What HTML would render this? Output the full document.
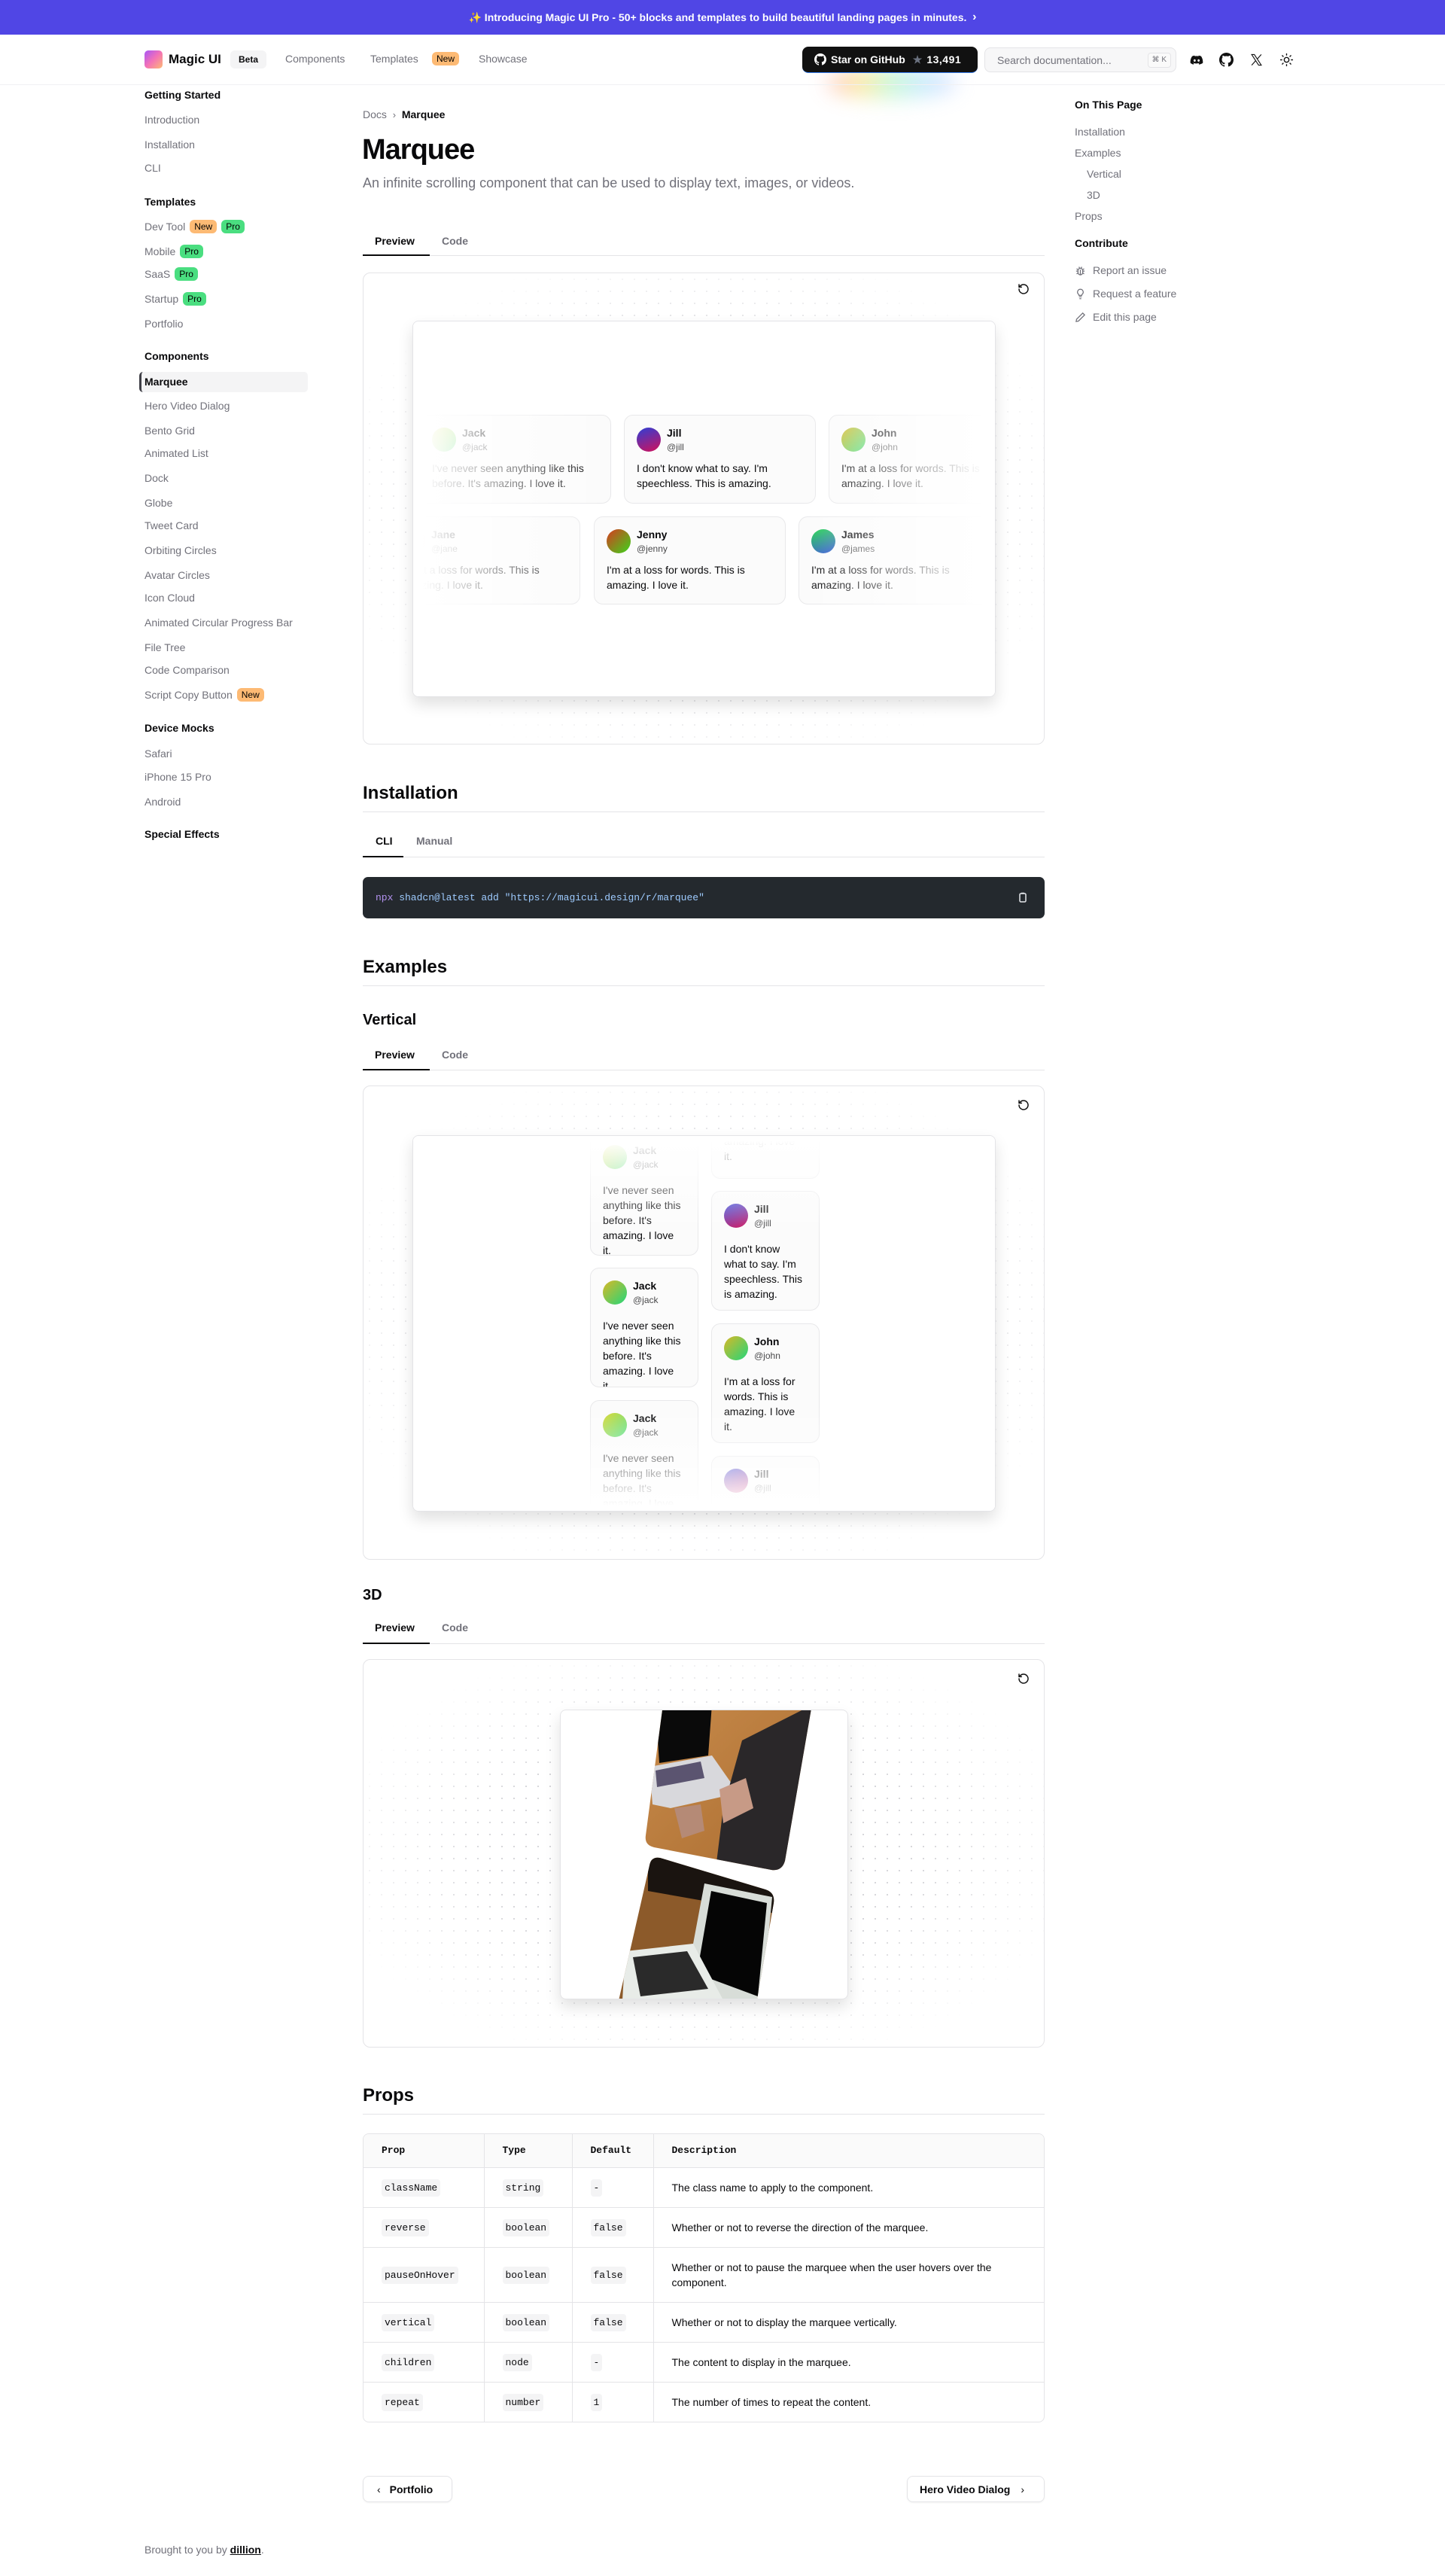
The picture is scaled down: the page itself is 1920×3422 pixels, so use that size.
<!DOCTYPE html>
<html><head><meta charset="utf-8"><style>
*{box-sizing:border-box;margin:0;padding:0}
body{width:1920px;height:3422px;position:relative;font-family:"Liberation Sans",sans-serif;color:#09090b;background:#fff;overflow:hidden}
.a{position:absolute}
.mono{font-family:"Liberation Mono",monospace}
.banner{left:0;top:0;width:1920px;height:46px;background:#5046e5;color:#fff;font-size:14px;font-weight:600;display:flex;align-items:center;justify-content:center}
.muted{color:#71717a}
.side div{position:absolute;left:192px;font-size:14px;color:#71717a;white-space:nowrap;line-height:20px}
.side .h{color:#09090b;font-weight:700}
.bd{display:inline-block;font-size:12px;line-height:16px;padding:1px 6px;border-radius:6px;color:#000;margin-left:6px;vertical-align:1px}
.bn{background:#fdba74}.bp{background:#4ade80}
.toc div{position:absolute;left:1428px;font-size:14px;color:#71717a;line-height:20px;white-space:nowrap}
.toc .h{color:#09090b;font-weight:700}
.tabs{position:absolute;left:482px;width:906px;height:1px;background:#e4e4e7}
.tab{position:absolute;font-size:14px;font-weight:600;line-height:20px}
.ul{position:absolute;height:2px;background:#09090b}
.box{position:absolute;left:482px;width:906px;border:1px solid #e4e4e7;border-radius:10px;overflow:hidden}
.dots{position:absolute;inset:0;background-image:radial-gradient(#d4d4d8 1px,transparent 1.2px);background-size:16px 16px;-webkit-mask-image:radial-gradient(ellipse at center,#000 45%,transparent 80%);mask-image:radial-gradient(ellipse at center,#000 45%,transparent 80%)}
.inner{position:absolute;background:#fff;border:1px solid #e4e4e7;border-radius:8px;box-shadow:0 10px 20px rgba(0,0,0,.12);overflow:hidden}
.card{position:absolute;border:1px solid #e8e8ea;background:#fbfbfb;border-radius:12px;padding:16px;overflow:hidden}
.card .av{width:32px;height:32px;border-radius:50%;position:absolute;left:16px;top:16px}
.card .n{position:absolute;left:56px;top:14px;font-size:14px;font-weight:600;line-height:18px}
.card .u{position:absolute;left:56px;top:34px;font-size:12px;color:#09090b;line-height:16px;opacity:.75}
.card .t{position:absolute;left:16px;top:60px;right:16px;font-size:14px;line-height:20px}
.v .t{right:22px}
.reset{position:absolute}
h2{position:absolute;left:482px;font-size:24px;font-weight:700;line-height:32px}
.hr{position:absolute;left:482px;width:906px;height:1px;background:#e4e4e7}
table{border-collapse:collapse;width:906px;font-size:14px}
.tw{position:absolute;left:482px;top:2834px;width:906px;border:1px solid #e4e4e7;border-radius:8px;overflow:hidden}
td,th{border-right:1px solid #e4e4e7;border-bottom:1px solid #e4e4e7;padding:0 24px;text-align:left;vertical-align:middle}
td:last-child,th:last-child{border-right:none}
tr:last-child td{border-bottom:none}
th{background:#fafafa;height:44px;font-family:"Liberation Mono",monospace;font-weight:700;font-size:13px}
td{height:53px;color:#09090b}
code{font-family:"Liberation Mono",monospace;font-size:13px;background:#f4f4f5;border-radius:4px;padding:4px 4px}
.btn{position:absolute;height:35px;border:1px solid #e4e4e7;border-radius:8px;font-size:14px;font-weight:600;display:flex;align-items:center;box-shadow:0 1px 2px rgba(0,0,0,.05)}
</style></head><body>

<div class="a banner">✨ Introducing Magic UI Pro - 50+ blocks and templates to build beautiful landing pages in minutes.&nbsp;&nbsp;<span style="font-size:16px">›</span></div>

<div class="a" style="left:192px;top:67px;width:24px;height:24px;border-radius:5px;background:linear-gradient(135deg,#a855f7,#f472b6 50%,#fdba74)"></div>
<div class="a" style="left:224px;top:68px;font-size:17px;font-weight:700;line-height:22px">Magic UI</div>
<div class="a" style="left:306px;top:67px;width:48px;height:24px;background:#f4f4f5;border-radius:6px;font-size:12px;font-weight:600;display:flex;align-items:center;justify-content:center">Beta</div>
<div class="a muted" style="left:379px;top:70px;font-size:14px">Components</div>
<div class="a muted" style="left:492px;top:70px;font-size:14px">Templates</div>
<div class="a bd bn" style="left:568px;top:69px;font-size:12px">New</div>
<div class="a muted" style="left:636px;top:70px;font-size:14px">Showcase</div>
<div class="a" style="left:1100px;top:90px;width:170px;height:40px;filter:blur(14px);background:linear-gradient(90deg,#fca5a5,#fde68a,#bbf7d0,#bae6fd,#c7d2fe);opacity:.8;border-radius:50%"></div>
<div class="a" style="left:1066px;top:62px;width:233px;height:35px;background:#111;border-radius:8px;color:#fff;font-size:14px;font-weight:600;display:flex;align-items:center;padding-left:16px;border-bottom:1px solid #3b82f6">
<svg width="16" height="16" viewBox="0 0 16 16" fill="#fff"><path d="M8 0C3.6 0 0 3.6 0 8c0 3.5 2.3 6.5 5.5 7.6.4.1.5-.2.5-.4v-1.4c-2.2.5-2.7-1-2.7-1-.4-.9-.9-1.2-.9-1.2-.7-.5.1-.5.1-.5.8.1 1.2.8 1.2.8.7 1.3 1.9.9 2.4.7.1-.5.3-.9.5-1.1-1.8-.2-3.6-.9-3.6-4 0-.9.3-1.6.8-2.1-.1-.2-.4-1 .1-2.1 0 0 .7-.2 2.2.8.6-.2 1.300-.3 2-.3s1.4.1 2 .3c1.5-1 2.2-.8 2.2-.8.4 1.1.2 1.9.1 2.1.5.6.8 1.3.8 2.1 0 3.1-1.9 3.7-3.6 3.9.3.3.5.8.5 1.5v2.2c0 .2.1.5.6.4C13.7 14.5 16 11.5 16 8c0-4.4-3.6-8-8-8z"/></svg>
<span style="margin-left:6px">Star on GitHub</span><span style="color:#6b7280;margin-left:10px">★</span><span style="margin-left:6px;letter-spacing:.5px">13,491</span></div>
<div class="a" style="left:1308px;top:63px;width:255px;height:33px;background:#f7f7f8;border:1px solid #e4e4e7;border-radius:8px;font-size:14px;color:#71717a;display:flex;align-items:center;padding-left:16px">Search documentation...<span style="position:absolute;right:6px;top:6px;height:20px;padding:0 5px;font-size:10px;border:1px solid #e4e4e7;border-radius:4px;background:#fafafa;line-height:18px">⌘ K</span></div>
<svg class="a" style="left:1581px;top:71px" width="18" height="18" viewBox="0 0 24 24" fill="#111"><path d="M20 5a17 17 0 0 0-4.3-1.3l-.5 1.1a16 16 0 0 0-6.4 0l-.5-1.1A17 17 0 0 0 4 5C1.3 9 .6 13 1 17a17 17 0 0 0 5.2 2.6l1.1-1.8-1.8-.9.4-.3c3.5 1.6 7.4 1.6 10.9 0l.4.3-1.8.9 1.1 1.8A17 17 0 0 0 23 17c.4-4.6-.8-8.6-3-12zM8.5 14.6c-1 0-1.9-1-1.9-2.1s.8-2.1 1.9-2.1 1.9 1 1.9 2.1-.8 2.1-1.9 2.1zm7 0c-1 0-1.9-1-1.9-2.1s.8-2.1 1.9-2.1 1.9 1 1.9 2.1-.8 2.1-1.9 2.1z"/></svg>
<svg class="a" style="left:1620px;top:70px" width="19" height="19" viewBox="0 0 16 16" fill="#111"><path d="M8 0C3.6 0 0 3.6 0 8c0 3.5 2.3 6.5 5.5 7.6.4.1.5-.2.5-.4v-1.4c-2.2.5-2.7-1-2.7-1-.4-.9-.9-1.2-.9-1.2-.7-.5.1-.5.1-.5.8.1 1.2.8 1.2.8.7 1.3 1.9.9 2.4.7.1-.5.3-.9.5-1.1-1.8-.2-3.6-.9-3.6-4 0-.9.3-1.6.8-2.1-.1-.2-.4-1 .1-2.1 0 0 .7-.2 2.2.8.6-.2 1.3-.3 2-.3s1.4.1 2 .3c1.5-1 2.2-.8 2.2-.8.4 1.1.2 1.9.1 2.1.5.6.8 1.3.8 2.1 0 3.1-1.9 3.7-3.6 3.9.3.3.5.8.5 1.5v2.2c0 .2.1.5.6.4C13.7 14.5 16 11.5 16 8c0-4.4-3.6-8-8-8z"/></svg>
<svg class="a" style="left:1661px;top:71px" width="17" height="17" viewBox="0 0 24 24" fill="none" stroke="#111" stroke-width="1.6"><path d="M3 2h5l13 20h-5zM21 2l-8 9M3 22l8-9"/></svg>
<svg class="a" style="left:1700px;top:70px" width="19" height="19" viewBox="0 0 24 24" fill="none" stroke="#111" stroke-width="1.8" stroke-linecap="round"><circle cx="12" cy="12" r="4"/><path d="M12 2v2M12 20v2M4.9 4.9l1.4 1.4M17.7 17.7l1.4 1.4M2 12h2M20 12h2M4.9 19.1l1.4-1.4M17.7 6.3l1.4-1.4"/></svg>
<div class="a" style="left:0;top:112px;width:1920px;height:1px;background:#f1f1f3"></div>

<div class="side">
<div class="h" style="top:116px">Getting Started</div>
<div style="top:149px">Introduction</div>
<div style="top:182px">Installation</div>
<div style="top:213px">CLI</div>
<div class="h" style="top:258px">Templates</div>
<div style="top:291px">Dev Tool<span class="bd bn">New</span><span class="bd bp">Pro</span></div>
<div style="top:324px">Mobile<span class="bd bp">Pro</span></div>
<div style="top:354px">SaaS<span class="bd bp">Pro</span></div>
<div style="top:387px">Startup<span class="bd bp">Pro</span></div>
<div style="top:420px">Portfolio</div>
<div class="h" style="top:463px">Components</div>
</div>
<div class="a" style="left:185px;top:494px;width:224px;height:27px;background:#f4f4f5;border-radius:5px;border-left:3px solid #3f3f46"></div>
<div class="side">
<div style="top:497px;color:#09090b;font-weight:600">Marquee</div>
<div style="top:529px">Hero Video Dialog</div>
<div style="top:562px">Bento Grid</div>
<div style="top:592px">Animated List</div>
<div style="top:625px">Dock</div>
<div style="top:658px">Globe</div>
<div style="top:688px">Tweet Card</div>
<div style="top:721px">Orbiting Circles</div>
<div style="top:754px">Avatar Circles</div>
<div style="top:784px">Icon Cloud</div>
<div style="top:817px">Animated Circular Progress Bar</div>
<div style="top:850px">File Tree</div>
<div style="top:880px">Code Comparison</div>
<div style="top:913px">Script Copy Button<span class="bd bn">New</span></div>
<div class="h" style="top:957px">Device Mocks</div>
<div style="top:991px">Safari</div>
<div style="top:1022px">iPhone 15 Pro</div>
<div style="top:1055px">Android</div>
<div class="h" style="top:1098px">Special Effects</div>
</div>

<div class="toc">
<div class="h" style="top:129px">On This Page</div>
<div style="top:165px">Installation</div>
<div style="top:193px">Examples</div>
<div style="top:221px;left:1444px">Vertical</div>
<div style="top:249px;left:1444px">3D</div>
<div style="top:277px">Props</div>
<div class="h" style="top:313px">Contribute</div>
<div style="top:349px;left:1452px">Report an issue</div>
<div style="top:380px;left:1452px">Request a feature</div>
<div style="top:411px;left:1452px">Edit this page</div>
</div>
<svg class="a" style="left:1428px;top:352px" width="15" height="15" viewBox="0 0 24 24" fill="none" stroke="#71717a" stroke-width="2"><rect x="7" y="7" width="10" height="14" rx="5"/><path d="M9 4l1.5 3M15 4l-1.5 3M3 13h4M17 13h4M4 8l3 2M20 8l-3 2M4 19l3-2M20 19l-3-2M12 10v11"/></svg>
<svg class="a" style="left:1428px;top:383px" width="15" height="15" viewBox="0 0 24 24" fill="none" stroke="#71717a" stroke-width="2"><path d="M9 18h6M10 22h4M12 2a6 6 0 0 0-4 10.5c.8.8 1 1.5 1 2.5h6c0-1 .2-1.7 1-2.5A6 6 0 0 0 12 2z"/></svg>
<svg class="a" style="left:1428px;top:414px" width="15" height="15" viewBox="0 0 24 24" fill="none" stroke="#71717a" stroke-width="2"><path d="M17 3l4 4L8 20l-5 1 1-5z"/></svg>

<div class="a muted" style="left:482px;top:144px;font-size:14px">Docs&nbsp;&nbsp;<span style="font-size:13px">›</span>&nbsp;&nbsp;<span style="color:#09090b;font-weight:600">Marquee</span></div>
<div class="a" style="left:481px;top:176px;font-size:38px;font-weight:700;letter-spacing:-1px;line-height:46px">Marquee</div>
<div class="a muted" style="left:482px;top:231px;font-size:18px;line-height:24px">An infinite scrolling component that can be used to display text, images, or videos.</div>

<div class="tab" style="left:498px;top:310px">Preview</div><div class="tab muted" style="left:587px;top:310px">Code</div>
<div class="tabs" style="top:339px"></div><div class="ul" style="left:482px;top:338px;width:89px"></div>

<div class="box" style="top:362px;height:627px">
<div class="dots"></div>
<div class="inner" style="left:65px;top:63px;width:775px;height:500px">
 <div class="card" style="left:8px;top:124px;width:255px;height:118px"><div class="av" style="background:linear-gradient(135deg,#d9d626,#4ade80)"></div><div class="n">Jack</div><div class="u">@jack</div><div class="t">I've never seen anything like this before. It's amazing. I love it.</div></div>
 <div class="card" style="left:280px;top:124px;width:255px;height:118px"><div class="av" style="background:linear-gradient(160deg,#2e3fd6,#d2105a)"></div><div class="n">Jill</div><div class="u">@jill</div><div class="t">I don't know what to say. I'm speechless. This is amazing.</div></div>
 <div class="card" style="left:552px;top:124px;width:255px;height:118px"><div class="av" style="background:linear-gradient(135deg,#d9b826,#4ade80)"></div><div class="n">John</div><div class="u">@john</div><div class="t">I'm at a loss for words. This is amazing. I love it.</div></div>
 <div class="card" style="left:-33px;top:259px;width:255px;height:117px"><div class="av" style="background:linear-gradient(135deg,#f87171,#fca5a5)"></div><div class="n">Jane</div><div class="u">@jane</div><div class="t">I'm at a loss for words. This is amazing. I love it.</div></div>
 <div class="card" style="left:240px;top:259px;width:255px;height:117px"><div class="av" style="background:linear-gradient(135deg,#d9391f,#3ad61c)"></div><div class="n">Jenny</div><div class="u">@jenny</div><div class="t">I'm at a loss for words. This is amazing. I love it.</div></div>
 <div class="card" style="left:512px;top:259px;width:255px;height:117px"><div class="av" style="background:linear-gradient(160deg,#1fd64a,#2f4fd6)"></div><div class="n">James</div><div class="u">@james</div><div class="t">I'm at a loss for words. This is amazing. I love it.</div></div>
 <div class="a" style="left:0;top:0;width:260px;height:100%;background:linear-gradient(90deg,#fff 5%,rgba(255,255,255,0))"></div>
 <div class="a" style="right:0;top:0;width:260px;height:100%;background:linear-gradient(270deg,#fff 5%,rgba(255,255,255,0))"></div>
</div>
</div>
<svg class="reset" style="left:1352px;top:376px" width="16" height="16" viewBox="0 0 24 24" fill="none" stroke="#111" stroke-width="2.2" stroke-linecap="round"><path d="M3 12a9 9 0 1 0 3-6.7L3 8M3 3v5h5"/></svg>

<h2 style="top:1038px">Installation</h2><div class="hr" style="top:1078px"></div>
<div class="tab" style="left:499px;top:1107px">CLI</div><div class="tab muted" style="left:553px;top:1107px">Manual</div>
<div class="tabs" style="top:1138px"></div><div class="ul" style="left:482px;top:1137px;width:54px"></div>
<div class="a mono" style="left:482px;top:1165px;width:906px;height:55px;background:#24292e;border-radius:7px;font-size:13px;padding:18px 17px;line-height:19px;color:#9ecbff"><span style="color:#b392f0">npx</span> shadcn@latest add "https://magicui.design/r/marquee"</div>
<svg class="a" style="left:1353px;top:1185px" width="12" height="14" viewBox="0 0 12 14" fill="none" stroke="#e5e7eb" stroke-width="1.5"><rect x="2" y="2" width="8" height="11" rx="1.5"/><path d="M4 1.5h4"/></svg>

<h2 style="top:1269px">Examples</h2><div class="hr" style="top:1309px"></div>
<div class="a" style="left:482px;top:1342px;font-size:20px;font-weight:700;line-height:26px">Vertical</div>
<div class="tab" style="left:498px;top:1391px">Preview</div><div class="tab muted" style="left:587px;top:1391px">Code</div>
<div class="tabs" style="top:1421px"></div><div class="ul" style="left:482px;top:1420px;width:89px"></div>

<div class="box v" style="top:1442px;height:630px">
<div class="dots"></div>
<div class="inner" style="left:65px;top:65px;width:775px;height:500px">
 <div class="card" style="left:235px;top:-5px;width:144px;height:164px"><div class="av" style="background:linear-gradient(135deg,#d9d626,#4ade80)"></div><div class="n">Jack</div><div class="u">@jack</div><div class="t" style="top:66px">I've never seen anything like this before. It's amazing. I love it.</div></div>
 <div class="card" style="left:235px;top:175px;width:144px;height:159px"><div class="av" style="background:linear-gradient(135deg,#d9b826,#22d67a)"></div><div class="n">Jack</div><div class="u">@jack</div><div class="t" style="top:66px">I've never seen anything like this before. It's amazing. I love it.</div></div>
 <div class="card" style="left:235px;top:351px;width:144px;height:159px"><div class="av" style="background:linear-gradient(135deg,#d9d626,#4ade80)"></div><div class="n">Jack</div><div class="u">@jack</div><div class="t" style="top:66px">I've never seen anything like this before. It's amazing. I love it.</div></div>
 <div class="card" style="left:396px;top:-100px;width:144px;height:157px"><div class="t" style="top:96px">amazing. I love it.</div></div>
 <div class="card" style="left:396px;top:73px;width:144px;height:159px"><div class="av" style="background:linear-gradient(160deg,#2e3fd6,#d2105a)"></div><div class="n">Jill</div><div class="u">@jill</div><div class="t" style="top:66px">I don't know what to say. I'm speechless. This is amazing.</div></div>
 <div class="card" style="left:396px;top:249px;width:144px;height:159px"><div class="av" style="background:linear-gradient(135deg,#d9b826,#22d67a)"></div><div class="n">John</div><div class="u">@john</div><div class="t" style="top:66px">I'm at a loss for words. This is amazing. I love it.</div></div>
 <div class="card" style="left:396px;top:425px;width:144px;height:159px"><div class="av" style="background:linear-gradient(160deg,#2e3fd6,#d2105a)"></div><div class="n">Jill</div><div class="u">@jill</div><div class="t" style="top:66px">I don't know what to say.</div></div>
 <div class="a" style="left:0;top:0;width:100%;height:130px;background:linear-gradient(180deg,#fff 5%,rgba(255,255,255,0))"></div>
 <div class="a" style="left:0;bottom:0;width:100%;height:140px;background:linear-gradient(0deg,#fff 5%,rgba(255,255,255,0))"></div>
</div>
</div>
<svg class="reset" style="left:1352px;top:1460px" width="16" height="16" viewBox="0 0 24 24" fill="none" stroke="#111" stroke-width="2.2" stroke-linecap="round"><path d="M3 12a9 9 0 1 0 3-6.7L3 8M3 3v5h5"/></svg>

<div class="a" style="left:482px;top:2106px;font-size:20px;font-weight:700;line-height:26px">3D</div>
<div class="tab" style="left:498px;top:2152px">Preview</div><div class="tab muted" style="left:587px;top:2152px">Code</div>
<div class="tabs" style="top:2183px"></div><div class="ul" style="left:482px;top:2182px;width:89px"></div>

<div class="box" style="top:2204px;height:516px">
<div class="dots"></div>
<div class="inner" style="left:261px;top:66px;width:383px;height:385px">
<svg width="383" height="385" viewBox="744 2270 383 385" style="position:absolute;left:0;top:0">
<defs>
<linearGradient id="w1" x1="0" y1="0" x2="1" y2="1"><stop offset="0" stop-color="#c98c4c"/><stop offset="1" stop-color="#a86a2e"/></linearGradient>
<clipPath id="c1"><path d="M880 2262 L1078 2262 L1042 2470 Q1038 2484 1024 2482 L868 2452 Q855 2449 857 2436 Z"/></clipPath>
<clipPath id="c2"><path d="M862 2476 Q864 2464 876 2466 L1016 2508 Q1029 2512 1027 2526 L1004 2660 L820 2660 Z"/></clipPath>
</defs>
<g clip-path="url(#c1)">
<rect x="840" y="2260" width="250" height="240" fill="url(#w1)"/>
<path d="M870 2262 L945 2262 L940 2330 L875 2340 Z" fill="#0a0a0a"/>
<path d="M862 2345 L945 2330 L980 2380 L890 2400 L866 2395 Z" fill="#d8d8dc"/>
<path d="M870 2350 L930 2338 L935 2360 L872 2372 Z" fill="#5b5470"/>
<path d="M985 2310 L1080 2262 L1080 2490 L950 2480 L960 2400 Z" fill="#2a2729"/>
<path d="M955 2375 L990 2360 L1000 2400 L960 2420 Z" fill="#c79a86"/>
<path d="M895 2400 L930 2395 L935 2430 L905 2440 Z" fill="#b58a76"/>
</g>
<g clip-path="url(#c2)">
<rect x="820" y="2460" width="220" height="200" fill="#8c5a2a"/>
<path d="M860 2460 L1030 2500 L1030 2540 L860 2510 Z" fill="#1a1410"/>
<path d="M935 2500 L1025 2518 L1012 2655 L900 2655 L920 2580 Z" fill="#d8ddd8"/>
<path d="M944 2510 L1018 2526 L1006 2650 L925 2620 Z" fill="#050505"/>
<path d="M830 2590 L920 2580 L960 2655 L826 2655 Z" fill="#e8ece8"/>
<path d="M840 2598 L912 2590 L940 2640 L850 2650 Z" fill="#2a2a2a"/>
</g>
</svg>
</div>
</div>
<svg class="reset" style="left:1352px;top:2222px" width="16" height="16" viewBox="0 0 24 24" fill="none" stroke="#111" stroke-width="2.2" stroke-linecap="round"><path d="M3 12a9 9 0 1 0 3-6.7L3 8M3 3v5h5"/></svg>

<h2 style="top:2768px">Props</h2><div class="hr" style="top:2808px"></div>
<div class="tw"><table>
<tr><th style="width:160px">Prop</th><th style="width:117px">Type</th><th style="width:108px">Default</th><th>Description</th></tr>
<tr><td><code>className</code></td><td><code>string</code></td><td><code>-</code></td><td>The class name to apply to the component.</td></tr>
<tr><td><code>reverse</code></td><td><code>boolean</code></td><td><code>false</code></td><td>Whether or not to reverse the direction of the marquee.</td></tr>
<tr><td style="height:73px"><code>pauseOnHover</code></td><td><code>boolean</code></td><td><code>false</code></td><td style="line-height:20px">Whether or not to pause the marquee when the user hovers over the component.</td></tr>
<tr><td><code>vertical</code></td><td><code>boolean</code></td><td><code>false</code></td><td>Whether or not to display the marquee vertically.</td></tr>
<tr><td><code>children</code></td><td><code>node</code></td><td><code>-</code></td><td>The content to display in the marquee.</td></tr>
<tr><td><code>repeat</code></td><td><code>number</code></td><td><code>1</code></td><td>The number of times to repeat the content.</td></tr>
</table></div>

<div class="btn" style="left:482px;top:3289px;width:119px;padding-left:18px"><span style="font-weight:400;margin-right:12px">‹</span>Portfolio</div>
<div class="btn" style="left:1205px;top:3289px;width:183px;padding-left:16px">Hero Video Dialog<span style="font-weight:400;margin-left:14px">›</span></div>

<div class="a muted" style="left:192px;top:3379px;font-size:14px">Brought to you by <span style="color:#09090b;font-weight:600;text-decoration:underline">dillion</span>.</div>
</body></html>
